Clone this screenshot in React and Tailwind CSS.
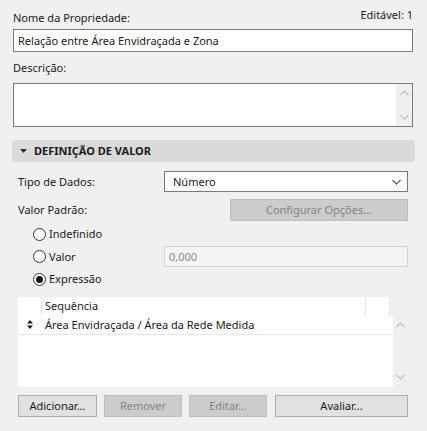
const Chevron = ({ up = false, className = '' }) => (
  <svg width="9" height="6" viewBox="0 0 9 6" className={className}>
    <path
      d={up ? 'M0.5 5 L4.5 1 L8.5 5' : 'M0.5 1 L4.5 5 L8.5 1'}
      fill="none"
      stroke="currentColor"
      strokeWidth="1.4"
    />
  </svg>
)

function Radio({ checked, label }) {
  return (
    <div className="flex items-center gap-[3px]">
      <span className="w-[13px] h-[13px] rounded-full border border-[#333] bg-white flex items-center justify-center">
        {checked && <span className="w-[7px] h-[7px] rounded-full bg-[#1a1a1a]" />}
      </span>
      <span>{label}</span>
    </div>
  )
}

function Button({ children, disabled, className = '' }) {
  return (
    <div
      className={`h-[22px] flex items-center justify-center border ${
        disabled
          ? 'bg-[#cccccc] border-[#bfbfbf] text-[#838383]'
          : 'bg-[#e1e1e1] border-[#adadad] text-[#1a1a1a]'
      } ${className}`}
    >
      {children}
    </div>
  )
}

export default function App() {
  return (
    <div
      className="w-[427px] h-[431px] bg-[#f0f0f0] text-[11px] leading-[16px] text-[#1a1a1a] flex flex-col"
      style={{ fontFamily: '"Noto Sans", "Open Sans", sans-serif' }}
    >
      {/* name + description */}
      <div className="px-[13px] pr-[14px] pt-[10px] flex flex-col">
        <div className="flex justify-between">
          <span>Nome da Propriedade:</span>
          <span className="-mt-[3px]">Editável: 1</span>
        </div>
        <div className="mt-[3px] h-[23px] border border-[#7a7a7a] bg-white flex items-center px-[4px]">
          Relação entre Área Envidraçada e Zona
        </div>
        <div className="mt-[8px]">Descrição:</div>
        <div className="mt-[7px] h-[44px] border border-[#7a7a7a] bg-white flex justify-end">
          <div className="w-[16px] bg-[#f0f0f0] flex flex-col items-center justify-between py-[6px] text-[#c2c2c2]">
            <Chevron up />
            <Chevron />
          </div>
        </div>
      </div>

      {/* section header */}
      <div className="mt-[13px] mx-[12px] h-[22px] rounded-[4px] bg-[#dadada] flex items-center pl-[8px] gap-[7px] font-bold">
        <svg width="7" height="4" viewBox="0 0 7 4">
          <path d="M0 0 H7 L3.5 4 Z" fill="#333" />
        </svg>
        <span>DEFINIÇÃO DE VALOR</span>
      </div>

      <div className="pl-[18px] pr-[19px] flex flex-col">
        <div className="mt-[9px] flex items-center">
          <span className="w-[146px]">Tipo de Dados:</span>
          <div className="flex-1 h-[21px] border border-[#7a7a7a] bg-white flex items-center justify-between pl-[8px] pr-[6px]">
            <span>Número</span>
            <Chevron className="text-[#666]" />
          </div>
        </div>
        <div className="mt-[7px] flex items-center">
          <span className="flex-1">Valor Padrão:</span>
          <Button disabled className="w-[178px]">Configurar Opções...</Button>
        </div>

        {/* radios */}
        <div className="pl-[15px] flex flex-col">
          <div className="mt-[3px] h-[20px] flex items-center">
            <Radio label="Indefinido" />
          </div>
          <div className="mt-[2px] h-[21px] flex items-center">
            <div className="w-[131px]">
              <Radio label="Valor" />
            </div>
            <div className="flex-1 h-[21px] border border-[#d4d4d4] bg-[#f4f4f4] flex items-center pl-[4px] text-[#8a8a8a]">
              0,000
            </div>
          </div>
          <div className="mt-[2px] h-[20px] flex items-center">
            <Radio checked label="Expressão" />
          </div>
        </div>

        {/* expression table */}
        <div className="mt-[8px] h-[90px] flex">
          <div className="w-[375px] flex flex-col">
            <div className="w-[372px] h-[18px] bg-white flex">
              <div className="w-[24px] border-r border-[#e3e3e3]" />
              <div className="flex-1 pl-[3px] flex items-center border-r border-[#e3e3e3]">Sequência</div>
              <div className="w-[24px] border-r border-[#e3e3e3]" />
            </div>
            <div className="flex-1 bg-white">
              <div className="h-[20px] border-b border-[#e6e6e6] flex items-center">
                <div className="w-[24px] flex justify-center">
                  <svg width="6" height="9" viewBox="0 0 6 9">
                    <path d="M0 3.5 L3 0 L6 3.5 Z M0 5.5 L3 9 L6 5.5 Z" fill="#1a1a1a" />
                  </svg>
                </div>
                <span className="pl-[3px]">Área Envidraçada / Área da Rede Medida</span>
              </div>
            </div>
          </div>
          <div className="flex-1 flex flex-col items-center justify-between pt-[25px] pb-[7px] text-[#c2c2c2]">
            <Chevron up />
            <Chevron />
          </div>
        </div>

        {/* actions */}
        <div className="mt-[8px] flex">
          <Button className="w-[79px]">Adicionar...</Button>
          <Button disabled className="ml-[7px] w-[78px]">Remover</Button>
          <Button disabled className="ml-[7px] w-[78px]">Editar...</Button>
          <Button className="ml-[8px] flex-1">Avaliar...</Button>
        </div>
      </div>
    </div>
  )
}
